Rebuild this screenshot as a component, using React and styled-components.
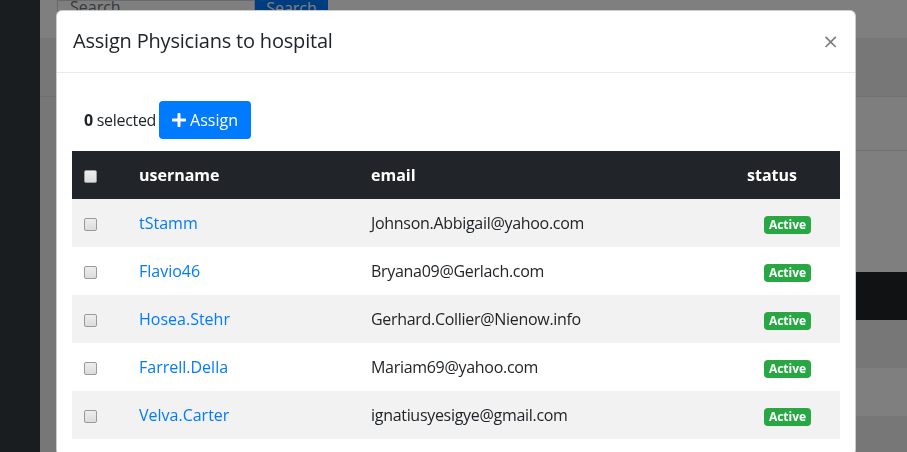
import React from "react";
import styled, { createGlobalStyle } from "styled-components";

const GlobalStyle = createGlobalStyle`
  html, body { margin: 0; padding: 0; height: 100%; overflow: hidden; }
  body {
    font-family: "Open Sans", "Noto Sans", sans-serif;
    font-size: 16px;
    color: #212529;
    background: #f0f0f0;
  }
  * { box-sizing: border-box; }
`;

const Page = styled.div`
  display: flex;
  height: 452px;
`;

const Sidebar = styled.div`
  width: 40px;
  background: #343a40;
`;

const Main = styled.div`
  flex: 1;
  display: flex;
  flex-direction: column;
  background: #eeeeee;
  overflow: hidden;
  & > * { flex-shrink: 0; }
`;

const TopBar = styled.div`
  height: 38px;
  background: #fff;
  display: flex;
  align-items: flex-end;
  padding: 0 0 24px 17px;
  overflow: hidden;
`;

const SearchInput = styled.div`
  width: 198px;
  height: 38px;
  margin-bottom: -24px;
  border: 1px solid #ced4da;
  padding: 0 12px 24px;
  line-height: 12px;
  color: #6c757d;
  display: flex;
  align-items: flex-end;
`;

const SearchButton = styled.div`
  width: 73px;
  height: 38px;
  margin-bottom: -24px;
  background: #007bff;
  color: #fff;
  display: flex;
  justify-content: center;
  align-items: flex-end;
  padding-bottom: 24px;
  line-height: 12px;
`;

const PanelHead = styled.div`
  height: 59px;
  border-bottom: 1px solid #dee2e6;
`;

const PanelRow = styled.div`
  height: 54px;
  background: #fdfdfd;
  border-bottom: 1px solid #dee2e6;
  margin-left: 16px;
`;

const PanelBody = styled.div`
  height: 121px;
  background: #fff;
  margin-left: 16px;
`;

const BgHead = styled.div`
  height: 48px;
  background: #212529;
  margin-left: 16px;
`;

const BgRow = styled.div`
  height: 48px;
  margin-left: 16px;
  background: ${(p) => (p.$striped ? "#eeeeee" : "#fff")};
`;

const Backdrop = styled.div`
  position: fixed;
  inset: 0;
  background: rgba(0, 0, 0, 0.5);
  display: flex;
  align-items: flex-start;
  padding: 10px 0 0 56px;
`;

const Modal = styled.div`
  width: 800px;
  background: #fff;
  border: 1px solid rgba(0, 0, 0, 0.2);
  border-radius: 6px;
  display: flex;
  flex-direction: column;
`;

const ModalHeader = styled.div`
  display: flex;
  align-items: center;
  justify-content: space-between;
  padding: 15px 16px 16px 16px;
  border-bottom: 1px solid #e9ecef;
`;

const Title = styled.h5`
  margin: 0;
  font-size: 20px;
  font-weight: 500;
  line-height: 30px;
  letter-spacing: -0.2px;
  color: #212529;
`;

const Close = styled.span`
  font-size: 26px;
  font-weight: 400;
  line-height: 1;
  color: #000;
  opacity: 0.5;
  margin-right: 1px;
`;

const ModalBody = styled.div`
  padding: 16px 15px;
`;

const Toolbar = styled.div`
  display: flex;
  align-items: center;
  gap: 3px;
  padding: 12px 12px;
`;

const Count = styled.span`
  font-size: 16px;
  letter-spacing: -0.3px;
  b { font-weight: 700; }
`;

const AssignButton = styled.button`
  display: flex;
  align-items: center;
  gap: 4px;
  height: 38px;
  padding: 0 13px;
  border: none;
  border-radius: 4px;
  background: #007bff;
  color: #fff;
  font-family: inherit;
  font-size: 16px;
`;

const Table = styled.table`
  width: 100%;
  border-collapse: collapse;
`;

const Th = styled.th`
  background: #212529;
  color: #fff;
  font-weight: 700;
  text-align: left;
  height: 48px;
  padding: 0 12px;
  width: ${(p) => p.$w || "auto"};
`;

const Tr = styled.tr`
  background: ${(p) => (p.$striped ? "#f2f2f2" : "#fff")};
`;

const Td = styled.td`
  height: 48px;
  padding: 0 12px;
  letter-spacing: ${(p) => (p.$tight ? "-0.3px" : "normal")};
  text-align: ${(p) => (p.$center ? "center" : "left")};
`;

const Check = styled.input.attrs({ type: "checkbox" })`
  appearance: none;
  margin: 0;
  width: 13px;
  height: 13px;
  vertical-align: middle;
  border: 1px solid #9a9a9a;
  border-radius: 2px;
  background: linear-gradient(#ededed, #dcdcdc);
`;

const UserLink = styled.a`
  color: #007bff;
  text-decoration: none;
`;

const Badge = styled.span`
  display: inline-block;
  background: #28a745;
  color: #fff;
  font-size: 12px;
  font-weight: 700;
  line-height: 1;
  padding: 3px 5px;
  border-radius: 4px;
`;

const PlusIcon = () => (
  <svg width="14" height="14" viewBox="0 0 448 448">
    <path
      fill="currentColor"
      d="M416 176H272V32c0-17.7-14.3-32-32-32h-32c-17.7 0-32 14.3-32 32v144H32c-17.7 0-32 14.3-32 32v32c0 17.7 14.3 32 32 32h144v144c0 17.7 14.3 32 32 32h32c17.7 0 32-14.3 32-32V272h144c17.7 0 32-14.3 32-32v-32c0-17.7-14.3-32-32-32z"
    />
  </svg>
);

const users = [
  { username: "tStamm", email: "Johnson.Abbigail@yahoo.com" },
  { username: "Flavio46", email: "Bryana09@Gerlach.com" },
  { username: "Hosea.Stehr", email: "Gerhard.Collier@Nienow.info" },
  { username: "Farrell.Della", email: "Mariam69@yahoo.com" },
  { username: "Velva.Carter", email: "ignatiusyesigye@gmail.com" },
];

export default function App() {
  return (
    <>
      <GlobalStyle />
      <Page>
        <Sidebar />
        <Main>
          <TopBar>
            <SearchInput>Search</SearchInput>
            <SearchButton>Search</SearchButton>
          </TopBar>
          <PanelHead />
          <PanelRow />
          <PanelBody />
          <BgHead />
          <BgRow $striped />
          <BgRow />
          <BgRow $striped />
        </Main>
      </Page>
      <Backdrop>
        <Modal>
          <ModalHeader>
            <Title>Assign Physicians to hospital</Title>
            <Close>×</Close>
          </ModalHeader>
          <ModalBody>
            <Toolbar>
              <Count>
                <b>0</b> selected
              </Count>
              <AssignButton>
                <PlusIcon />
                Assign
              </AssignButton>
            </Toolbar>
            <Table>
              <thead>
                <tr>
                  <Th $w="55px">
                    <Check />
                  </Th>
                  <Th $w="232px">username</Th>
                  <Th $w="376px">email</Th>
                  <Th>status</Th>
                </tr>
              </thead>
              <tbody>
                {users.map((u, i) => (
                  <Tr key={u.username} $striped={i % 2 === 0}>
                    <Td>
                      <Check />
                    </Td>
                    <Td>
                      <UserLink href="#">{u.username}</UserLink>
                    </Td>
                    <Td $tight>{u.email}</Td>
                    <Td $center>
                      <Badge>Active</Badge>
                    </Td>
                  </Tr>
                ))}
              </tbody>
            </Table>
          </ModalBody>
        </Modal>
      </Backdrop>
    </>
  );
}
